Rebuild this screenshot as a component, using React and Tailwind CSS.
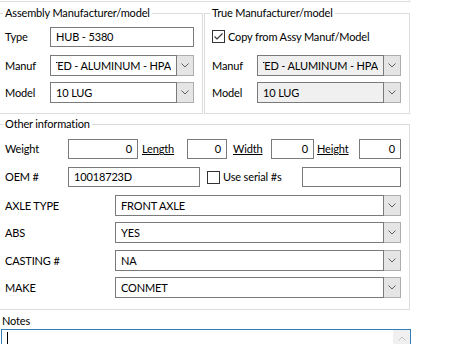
import React from 'react';

function Chevron({ up }) {
  return (
    <svg width="8" height="5" viewBox="0 0 8 5" className="block">
      <path d={up ? 'M0.5 4.5 L4 1 L7.5 4.5' : 'M0.5 0.5 L4 4 L7.5 0.5'} fill="none" stroke={up ? '#c2c2c2' : '#606060'} strokeWidth="1" />
    </svg>
  );
}

function Check({ checked }) {
  return (
    <div className="w-[13px] h-[13px] border border-[#333] bg-white flex items-center justify-center shrink-0">
      {checked && (
        <svg width="11" height="11" viewBox="0 0 11 11" className="block">
          <path d="M1.5 5.5 L4 8 L9.5 2.5" fill="none" stroke="#333" strokeWidth="1.1" />
        </svg>
      )}
    </div>
  );
}

function TextBox({ value, right, className = '' }) {
  return (
    <div className={`h-[20px] border border-[#7a7a7a] bg-white flex items-center px-[5px] whitespace-nowrap overflow-hidden ${right ? 'justify-end' : ''} ${className}`}>
      {value}
    </div>
  );
}

function Combo({ value, disabled, clip, className = '' }) {
  return (
    <div className={`h-[21px] flex ${className}`}>
      <div className={`flex-1 min-w-0 border border-[#7a7a7a] flex items-center pl-[5px] pr-[5px] ${disabled ? 'bg-[#f0f0f0]' : 'bg-white'}`}>
        <div className={`flex-1 min-w-0 flex overflow-hidden whitespace-nowrap ${clip ? 'justify-end' : ''}`}>
          <span className="shrink-0">{value}</span>
        </div>
      </div>
      <div className="w-[17px] border border-l-0 border-[#adadad] bg-[#e5e5e5] flex items-center justify-center">
        <Chevron />
      </div>
    </div>
  );
}

export default function App() {
  return (
    <div className="w-[454px] h-[344px] overflow-hidden bg-white text-black text-[11px] tracking-[-0.15px] leading-4 font-['Lato',sans-serif]">
      <div className="h-[2px] w-[410px] border-b border-r border-[#dcdcdc]" />

      <div className="mt-[3px] flex items-start w-[410px]">
        <fieldset className="w-[203px] border border-l-0 border-[#dcdcdc] pl-[5px] pr-[8px] pt-[6px] pb-[10px]">
          <legend className="ml-[-2px] px-[2px] leading-4">Assembly Manufacturer/model</legend>
          <div className="flex items-center">
            <span className="w-[45px]">Type</span>
            <TextBox value="HUB - 5380" className="w-[144px]" />
          </div>
          <div className="flex items-center mt-[8px]">
            <span className="w-[45px]">Manuf</span>
            <Combo value="OATED - ALUMINUM - HPA" clip className="w-[144px]" />
          </div>
          <div className="flex items-center mt-[6px]">
            <span className="w-[45px]">Model</span>
            <Combo value="10 LUG" className="w-[144px]" />
          </div>
        </fieldset>

        <fieldset className="ml-[1px] w-[206px] border border-[#dcdcdc] pl-[7px] pr-[8px] pt-[9px] pb-[10px]">
          <legend className="ml-[-2px] px-[2px] leading-4">True Manufacturer/model</legend>
          <div className="flex items-center h-[13px]">
            <Check checked />
            <span className="ml-[3px]">Copy from Assy Manuf/Model</span>
          </div>
          <div className="flex items-center mt-[12px]">
            <span className="w-[45px]">Manuf</span>
            <Combo value="OATED - ALUMINUM - HPA" clip disabled className="w-[144px]" />
          </div>
          <div className="flex items-center mt-[6px]">
            <span className="w-[45px]">Model</span>
            <Combo value="10 LUG" disabled className="w-[144px]" />
          </div>
        </fieldset>
      </div>

      <fieldset className="mt-[2px] w-[410px] border border-l-0 border-[#dcdcdc] pl-[5px] pr-[8px] pt-[7px] pb-[11px]">
        <legend className="ml-[-2px] px-[2px] leading-4">Other information</legend>
        <div className="flex items-center">
          <span className="w-[63px]">Weight</span>
          <TextBox value="0" right className="w-[70px]" />
          <span className="w-[49px] pl-[4px] underline">Length</span>
          <TextBox value="0" right className="w-[40px]" />
          <span className="w-[44px] pl-[6px] underline">Width</span>
          <TextBox value="0" right className="w-[43px]" />
          <span className="w-[45px] pl-[3px] underline">Height</span>
          <TextBox value="0" right className="w-[42px]" />
        </div>
        <div className="flex items-center mt-[8px]">
          <span className="w-[63px]">OEM #</span>
          <TextBox value="10018723D" className="w-[132px]" />
          <div className="ml-[7px]"><Check /></div>
          <span className="ml-[3px] flex-1">Use serial #s</span>
          <TextBox value="" className="w-[99px]" />
        </div>
        <div className="flex items-center mt-[8px]">
          <span className="w-[110px]">AXLE TYPE</span>
          <Combo value="FRONT AXLE" className="flex-1" />
        </div>
        <div className="flex items-center mt-[6px]">
          <span className="w-[110px]">ABS</span>
          <Combo value="YES" className="flex-1" />
        </div>
        <div className="flex items-center mt-[7px]">
          <span className="w-[110px]">CASTING #</span>
          <Combo value="NA" className="flex-1" />
        </div>
        <div className="flex items-center mt-[6px]">
          <span className="w-[110px]">MAKE</span>
          <Combo value="CONMET" className="flex-1" />
        </div>
      </fieldset>

      <div className="mt-[3px] pl-[2px]">Notes</div>
      <div className="ml-[1px] w-[410px] h-[40px] border border-[#2f7fbd] flex">
        <div className="flex-1 pl-[5px] pt-[2px]">
          <div className="w-[1px] h-[14px] bg-black" />
        </div>
        <div className="w-[17px] bg-[#f0f0f0] flex justify-center pt-[6px]">
          <Chevron up />
        </div>
      </div>
    </div>
  );
}
